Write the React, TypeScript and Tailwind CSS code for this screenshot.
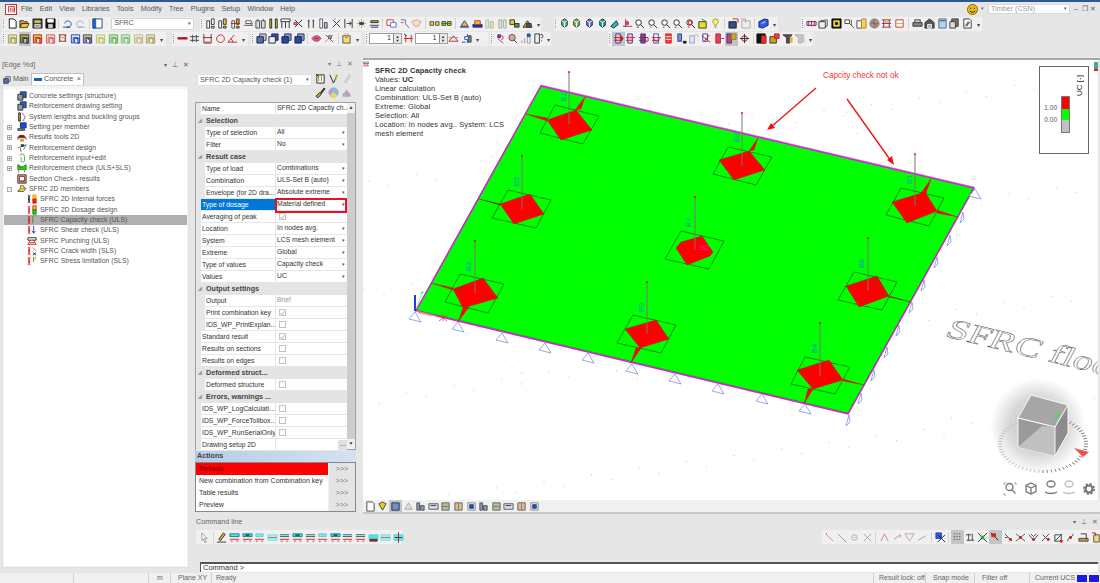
import React from "react";

type Part = [string, string, string];
const P = (d: string, s = "#333", f = "none"): Part => [d, s, f];

const pair = (c: string, f: string): Part[] => [P("M2 3h3v8H2z", c, "#fff"), P("M7 1h3v6H7z", c, f), P("M7 9h3v2H7z", c, f)];
const frame = (c: string, f: string): Part[] => [P("M1.5 2h9v9h-2V5h-5v6h-2z", c, f), P("M5 6h5v5H5z", c, "none")];
const rb = (c: string, f: string): Part[] => [P("M3 1h5v10H3z", "#2040c0", f), P("M1 5h10M1 8h8", c)];
const mag = (c: string): Part[] => [P("M2 5a3 3 0 1 0 6 0a3 3 0 1 0-6 0", "#222", "#fff"), P("M7.5 7.5L11 11", "#222"), P("M3 10h2", c)];
const cube = (c: string): Part[] => [P("M3 3l3-2 3 2v5l-3 2-3-2z", "#222", c), P("M3 3l3 2 3-2M6 5v5", "#fff")];
const beam = (c: string): Part[] => [P("M1 2h10v3H1z", c, "#50e8e8"), P("M1 8h10", "#e02020"), P("M2 10h2M8 10h2", "#e02020")];

const G: Record<string, Part[]> = {
  doc: [P("M2.5 1h5L10 3.5V11H2.5z", "#111", "#fff")],
  open: [P("M1 3h4l1 1h3v2H3l-2 4z", "#333", "#d9a520"), P("M3 6h8l-2 4.5H1z", "#333", "#f0c030")],
  saveAll: [P("M1 1h10v10H1z", "#333", "#333"), P("M3 3h6v2H3z", "#d8c040", "#d8c040"), P("M3 7h6v3H3z", "#ddd", "#999")],
  save: [P("M1 1h10v10H1z", "#111", "#111"), P("M3 1.5h6v3H3z", "#fff", "#fff"), P("M4 7h4v3.5H4z", "#ccc", "#ccc")],
  undo: [P("M3 6a3.5 3.5 0 1 1 2 4H9", "#2050b0"), P("M1 10h7", "#2050b0")],
  redo: [P("M9 6a3.5 3.5 0 1 0-2 4H3", "#a0a8b8"), P("M4 10h7", "#a0a8b8")],
  panel: [P("M1 1h10v10H1z", "#204070", "#fff"), P("M1 1h3v10H1z", "#2060b0", "#2060b0")],
  c1: pair("#333", "#fff"),
  c2: pair("#333", "#e8c828"),
  c3: [...pair("#444", "#c8a020"), P("M1 6h10", "#c02020")],
  c4: [P("M1 8h10M3 3h6v3H3z", "#555", "#fff"), P("M8 8l3-3", "#d02020")],
  c5: [P("M1 3h4v8H1zM7 3h4v8H7z", "#444", "#ddd"), P("M3 1v2M9 1v2", "#2040c0")],
  c6: [P("M2 1h2v10H2zM8 1h2v10H8z", "#222", "#e8c828")],
  c7: [P("M1 1h10v3H1z", "#333", "#fff"), P("M2 4v7M6 4v7M10 4v7", "#333")],
  c8: [P("M2 2l8 8M10 2l-8 8", "#224"), P("M1 5h3v2H1z", "#c02020", "#e8c828")],
  c9: [P("M3 2v9M8 2v9", "#222"), P("M2 3h2M7 3h2", "#2040c0"), P("M2 10h2M7 10h2", "#d0a020")],
  c10: [P("M2 1h3v10H2z", "#555", "#fff"), P("M7 5h3v6H7z", "#2040c0", "#e8c828")],
  c11: [P("M2 2l4 4-4 4M10 2L6 6l4 4", "#333"), P("M4 1h1", "#2040c0")],
  c12: [P("M2 1v10M10 1v10M4 6h5", "#333"), P("M7 4l2 2-2 2", "#222")],
  spark: [P("M6 1v10M1 6h10M2.5 2.5l7 7M9.5 2.5l-7 7", "#d0b020"), P("M4 5h4v2H4z", "#2040a0", "#2040a0")],
  barh: [P("M2 3h8v2H2z", "#222", "#e8c828"), P("M1 8h10", "#2040a0"), P("M2 10h8", "#333")],
  redbox: [P("M1 2h7v6H1z", "#d03030", "#fff"), P("M5 5h6v5H5z", "#5070c0", "#fff")],
  hook: [P("M2 2h5v4M7 6l4 5", "#5070c0"), P("M2 5h3", "#e04040")],
  peach: [P("M1 4l5-2 5 2-3 5H4z", "#d8a090", "#f5e0d0")],
  glass1: [P("M1 4h4v4H1zM7 4h4v4H7z", "#555", "#e8c828")],
  glass2: [P("M1 4h4v4H1zM7 4h4v4H7z", "#333", "#e0e020"), P("M1 6h10", "#208020")],
  by1: [P("M2 9l4-6 4 6z", "#2030a0", "#e8c828"), P("M1 10h10", "#2030a0")],
  by2: [P("M1 7h10v3H1z", "#2030a0", "#2030a0"), P("M3 3h6v4H3z", "#d03030", "#e8c828")],
  gh1: [P("M2 2h3v9H2z", "#a8c8a0", "#d8ecd0"), P("M7 4h3v7H7z", "#b0b090", "#e8e8c0")],
  gh2: [P("M2 2h3v9H2zM7 2h3v9H7z", "#a0a8a0", "#dde8d8")],
  by3: [P("M1 2h5v5H1z", "#333", "#e8c828"), P("M6 6h5v4H6z", "#333", "#40a040")],
  by4: [P("M1 10l5-7 5 7z", "#333", "#c8a030"), P("M5 6h5v4H5z", "#333", "#555")],
  v1: cube("#50c090"),
  v2: cube("#80c060"),
  v3: cube("#6080d0"),
  v4: cube("#20a0a0"),
  v5: [P("M2 9l6-6 2 4-5 4z", "#222", "#20c0c0")],
  axis: [P("M4 1v8h7", "#d02020"), P("M1 9h4", "#2040c0"), P("M4 4h3v3H4z", "#c03060", "#e04080")],
  m1: mag("#222"), m2: mag("#888"), m3: mag("#666"), m4: mag("#444"),
  m5: [...mag("#d02020"), P("M4 3h3v4H4z", "#d02020")],
  yc: [P("M2 4h8v7H2z", "#333", "#e8e020"), P("M5 1l5 3", "#208020")],
  bulb: [P("M3 4a3 3 0 1 1 6 0c0 2-2 2-2 4H5c0-2-2-2-2-4z", "#a09020", "#f8f080"), P("M5 10h2", "#555")],
  bl1: [P("M1 4h8v7H1z", "#222", "#30508a"), P("M5 1h6v4", "#d02020")],
  bl2: [P("M2 3h9v8H2z", "#a8a8b0", "#eee"), P("M1 1h5v4", "#d09090")],
  bl3: [P("M1 4l6-3 4 1v6l-6 3-4-1z", "#102080", "#3060e0"), P("M4 6l4-2", "#e8e8ff")],
  d1: [P("M1 4h10v4H1z", "#203080", "#eef"), P("M3 3v6M6 3v6M9 3v6", "#d02020")],
  d2: [P("M3 3l7-1v7l-7 1z", "#444", "#fff"), P("M1 4h7v7H1z", "#333", "#eee")],
  d3: [P("M1 1h10v10H1z", "#111", "#111"), P("M3 3h6v6H3z", "#e8d020", "#e8d020"), P("M5 5h2v2H5z", "#111", "#111")],
  d4: [P("M1 2h5v4H1z", "#444", "#ffe"), P("M6 6l5 5M8 2v6", "#555")],
  d5: [P("M1 3h5v8H1z", "#444", "#fff"), P("M6 1h5v10H6z", "#c08020", "#f0d060")],
  d6: [P("M6 1a5 5 0 1 0 .01 0", "#777", "#999"), P("M2 6h8M6 2v8M3 3l6 6", "#c05050")],
  d7: [P("M1 2h10M1 6h10M1 10h10", "#d02020"), P("M3 2v8M9 2v8", "#2040b0"), P("M5 3h2v2H5z", "#e8c828", "#e8c828")],
  d8: [P("M2 2h8v8H2z", "#d03030", "#fff"), P("M2 6h8", "#d8b020")],
  pr1: [P("M1 5h10v4H1z", "#333", "#888"), P("M3 2h6v3H3z", "#444", "#ccc")],
  pr2: [P("M1 5l5-4 5 4v6H1z", "#333", "#555"), P("M4 7h4v4H4z", "#fff", "#aaa")],
  pr3: [P("M2 1h8v10H2z", "#4070a0", "#b8d0e8"), P("M3 3h6", "#204060")],
  pr4: [P("M3 1h7v8H3z", "#333", "#777"), P("M1 4h6v7H1z", "#333", "#ddd")],
  pr5: [P("M2 1h6l2 2v8H2z", "#333", "#fff"), P("M4 8l3-4 1 1-3 4z", "#333", "#e8c828")],
  f1: frame("#a0a050", "#e8e0b0"),
  f2: frame("#333", "#c8a840"),
  f3: [...frame("#c02020", "#e8c828")],
  f4: frame("#d06060", "#f0d0d0"),
  f5: [P("M2 2h8M2 9h8", "#d02020"), P("M3 2v7M9 2v7", "#222"), P("M2 5h8", "#c0a020")],
  f6: [...frame("#2040b0", "#e0e8ff")],
  f7: [...frame("#2040b0", "#e8c828"), P("M6 6l5 5", "#d02020")],
  f8: frame("#b8c070", "#f0f0c0"),
  f9: [...frame("#60b060", "#c8e8a0")],
  f10: [...frame("#70c070", "#d0f0d0")],
  f11: frame("#c0b890", "#eee8c8"),
  f12: frame("#a8a060", "#e8e0b8"),
  rbar: [P("M1 5h10v1.6H1z", "#b01818", "#c81818")],
  h: [P("M1 4h10M1 8h10M4 2v8M8 2v8", "#444")],
  u: [P("M2 1v10h8V1M1 5h10", "#703030"), P("M3 10h6", "#d02020")],
  o: [P("M6 2a4.2 4.2 0 1 0 .01 0", "#c02020")],
  ang: [P("M1 10h10M1 10L8 2M4 6a4 4 0 0 1 2 4", "#c02020")],
  st1: [P("M4 1h7v7H4z", "#444", "#b8c8e8"), P("M1 4h7v7H1z", "#223", "#5070b0")],
  st2: [P("M4 1h7v7H4z", "#203060", "#3050a0"), P("M1 4h7v7H1z", "#223", "#eef")],
  st3: [P("M4 1h7v7H4z", "#203060", "#88a0d0"), P("M1 4h7v7H1z", "#102050", "#2a4a90")],
  eye: [P("M1 6c3-4 7-4 10 0c-3 4-7 4-10 0z", "#b03050", "#e06080"), P("M4 6h4", "#2040a0")],
  cross: [P("M1 10L10 2", "#d8a020"), P("M2 2l8 8", "#d02020"), P("M5 3h3v3H5z", "#2050c0", "#e8c020")],
  ybox: [P("M2 3h8v8H2z", "#555", "#f0e070"), P("M4 1h1M7 1h1M5 5h2", "#d02020")],
  br: [P("M3 2v8M9 2v8M1 6h10", "#d02020"), P("M1 1l3 2", "#333")],
  tri: [P("M1 9l5-6 5 6z", "#c03030", "#f8e0e0"), P("M1 5h10", "#50b0b0")],
  blue: [P("M7 1v3H4v3h3v4M1 10h4", "#2050b0"), P("M8 3h3v7H8z", "#444", "#6080c0")],
  q1: [P("M3 2h3v3H3z", "#2040c0", "#e02040"), P("M3 6l6 5", "#d02040"), P("M7 3a2 2 0 1 1 0 4", "#d02040")],
  q2: [P("M2 5a3.5 3.5 0 1 0 7 0a3.5 3.5 0 1 0-7 0", "#555", "#e8a0a0"), P("M7.5 7.5L11 11", "#333")],
  q3: [P("M2 8v3M5 6v5M8 3h3v8H8z", "#999"), P("M8 1h3v3H8z", "#2050a0", "#3060c0")],
  q4: [P("M2 1h5v10H2z", "#333", "#eee"), P("M8 2a2 2 0 0 1 3 1c0 1-1.5 1.5-1.5 3M9.5 8v1", "#334")],
  r1: [...rb("#d02020", "#f8c0c0"), P("M9 3l2 3-2 3z", "#c02020", "#c02020")],
  r2: rb("#d02020", "#ffc8c8"),
  r3: [...rb("#2040c0", "#d83030"), P("M7 9h4V5", "#d02020")],
  r4: [...rb("#d02020", "#fff"), P("M3 6a3 3 0 1 0 6 0", "#d02020")],
  r5: [P("M3 1h6v10H3z", "#d02020", "#f04040"), P("M3 4h6M3 7h6", "#f8e0e0")],
  r6: [P("M2 1h4v8H2z", "#2040a0", "#8090d0"), P("M8 9h3v2H8z", "#222", "#222")],
  r7: [P("M2 3h5v8H2z", "#90a0d0", "#e0e8f8"), P("M7 4c0-3 4-3 4 0", "#d0a0a0")],
  r8: [P("M2 1h5v8H2z", "#2040a0", "#fff"), P("M1 3l9 7M9 2l-6 8", "#e01010")],
  r9: [P("M2 1h5v10H2z", "#c02020", "#e84060"), P("M8 6h3", "#2040c0")],
  r10: [P("M1 1h5v10H1z", "#2040a0", "#d04060"), P("M6 1h5v6H6z", "#908020", "#c0b040")],
  tgt: [P("M6 3a3 3 0 1 0 .01 0", "#601818"), P("M6 1v10M1 6h10", "#601818")],
  s1: [P("M1 1h9v10H1z", "#111", "#111"), P("M6 3h5v8H6z", "#c02020", "#e03030")],
  s2: [P("M1 4h7v7H1z", "#333", "#d0a020"), P("M6 1h5v5H6z", "#c02020", "#e84040")],
  s3: [P("M1 2h10L8 5v6H5V5z", "#333", "#555"), P("M9 5h2v5H9z", "#d0b040", "#e0c040")],
  s4: [P("M1 2h10L8 5v6H5V5z", "#aaa", "#ccc"), P("M9 5h2v5H9z", "#b8b8b8", "#ddd")],
  cur: [P("M3 1l6 6H6l2 4-1.5.5-2-4L3 9z", "#999", "#fff")],
  pen: [P("M3 8l5-7 2 1.5-5 7z", "#333", "#d8b020"), P("M1 11h10", "#333")],
  be1: beam("#108080"), be2: [...beam("#108080"), P("M4 3h4v1H4z", "#206060", "#206060")],
  be3: [P("M2 2h8v3H2z", "#50d0d0", "#90e0e0"), P("M1 8h10", "#e02020"), P("M2 10h2M8 10h2", "#e02020")],
  be4: [P("M1 3h10M1 5h10", "#106060"), P("M1 8h10", "#e02020"), P("M2 10h2M8 10h2", "#e02020")],
  be5: [P("M1 3h10v5H1z", "#50e0e0", "#50e0e0"), P("M2 8h8v2H2z", "#702020", "#c02020")],
  be6: [P("M1 3h10v6H1z", "#70e8e8", "#a0f0f0"), P("M1 6h10", "#e06060")],
  be7: [P("M1 3h10v6H1z", "#50d8d8", "#70e0e0"), P("M6 0v12", "#d01010"), P("M2 6h8", "#333")],
  sn1: [P("M2 2l8 8", "#e08080"), P("M2 2h1", "#d02020")],
  sn2: [P("M2 2l8 8", "#a09090"), P("M10 10h1", "#d06060")],
  sn3: [P("M3 6a3 3 0 1 0 6 0a3 3 0 1 0-6 0", "#aaa"), P("M6 6h1", "#d06060")],
  sn4: [P("M2 2l8 8M10 2l-8 8", "#a8a0a0")],
  sn5: [P("M2 10l4-8 4 8", "#d08080")],
  sn6: [P("M2 8l7-5M9 3v3", "#d08080")],
  sn7: [P("M1 2h10L6 10z", "#b0a8b0")],
  sn8: [P("M1 9l9-5", "#c89090")],
  sn9: [P("M1 1h6v6H1z", "#2040c0", "#3060e0"), P("M3 3l8 8M11 3l-8 8", "#222")],
  sn10: [P("M2 2h1M5 2h1M8 2h1M2 5h1M5 5h1M8 5h1M2 8h1M5 8h1M8 8h1", "#222")],
  sn11: [P("M2 9h8M4 2v7M8 2v7M1 3h6", "#444"), P("M2 9h2", "#d02020")],
  sn12: [P("M1 1l10 10M11 1L1 11", "#333"), P("M4.5 4.5h3v3h-3z", "#20a020", "#20c020")],
  sn13: [P("M1 1l8 8", "#222"), P("M2 2h4v3H2z", "#d02020", "#d02020")],
  sn14: [P("M2 2l8 8M2 6h3", "#444"), P("M7 7h2v2H7z", "#d02020", "#d02020")],
  sn15: [P("M1 2l10 8M11 2L1 10", "#555"), P("M5 5h2v2H5z", "#d02020", "#d02020")],
  sn16: [P("M1 3l5 6 5-6M3 2l3 3 3-3", "#444"), P("M5 7h2v2H5z", "#d02020", "#d02020")],
  sn17: [P("M2 10L10 2M3 3l6 6", "#444"), P("M8 7h2v2H8z", "#d02020", "#d02020")],
  sn18: [P("M2 3h7v7H2zM2 10L10 2", "#444"), P("M8 9h2v2H8z", "#d02020", "#d02020")],
  sn19: [P("M3 10C3 5 8 7 9 2", "#444"), P("M5 5h2v2H5z", "#d02020", "#d02020")],
  sn20: [P("M1 7h10v3H1z", "#444", "#c8a040"), P("M3 2h6v5", "#333")],
  sn21: [P("M3 3h6v8H3z", "#555", "#f0d880"), P("M1 1h4v3", "#d02020")],
  t1: [P("M4 1h7v7H4z", "#223", "#3060c0"), P("M1 4h6v7H1z", "#223", "#9098a8")],
  t2: [P("M2 1h2v10H2z", "#111", "#d8c020"), P("M6 1l4 5-3 5", "#a030a0")],
  t3: [P("M4 1h7v6H4z", "#102080", "#2050c0"), P("M1 8h8v2H1z", "#223", "#999")],
  t4: [P("M1 9a5 5 0 0 1 10 0", "#222"), P("M3 4h5l2 3H1z", "#c02020", "#333"), P("M4 9h4v2H4z", "#d0a020", "#d0a020")],
  t5: [P("M1 6l5-2 5-2-3 6", "#1a8060"), P("M4 6l1 5", "#d02020"), P("M5 2h3v2H5z", "#203060", "#203060")],
  t6: [P("M6 1a3 3 0 0 1 3 3v5a2 2 0 0 1-4 0V5", "#40a040"), P("M3 3l3-2", "#40a040")],
  t7: [P("M1 2l5 3 5-3v6H1z", "#108010", "#10e010"), P("M2 4l2 2M6 4v2", "#e01010"), P("M2 9v2M9 9v2", "#e01010")],
  t8: [P("M1 1h10v10H1z", "#222", "#e8a0a0"), P("M3 3h6v6H3z", "#b02020", "#fff"), P("M4 8h6", "#208020")],
  t9: [P("M1 8l4-3h6l-3 4H1z", "#555", "#e0d020"), P("M4 5V2h4l1 3", "#666", "#f0e040")],
  rr: [P("M1 1c3 3 3 7 0 10M4 1c-3 3-3 7 0 10", "#111"), P("M7 1h4v5H7z", "#e0b020", "#e8d020"), P("M7 6h4v5H7z", "#e01010", "#f02020")],
  rg: [P("M1 1c3 3 3 7 0 10M4 1c-3 3-3 7 0 10", "#e01010"), P("M7 1h4v5H7z", "#e01010", "#e8d020"), P("M7 6h4v5H7z", "#108010", "#20d020")],
  rc: [P("M1 1c3 3 3 7 0 10M4 1c-3 3-3 7 0 10", "#e01010"), P("M7 1v9", "#6a6a20"), P("M8 1h3", "#88a020")],
  rs: [P("M1 1c3 3 3 7 0 10M4 1c-3 3-3 7 0 10", "#e01010"), P("M8 1v8M6 7l2 3 2-3", "#1030c0")],
  rp: [P("M1 2h10v3H1z", "#222", "#eee"), P("M4 5L1 10h10L8 5", "#c01010"), P("M3 8h6", "#c01010")],
  rw: [P("M1 1c3 3 3 7 0 10M4 1c-3 3-3 7 0 10", "#e01010"), P("M7 8l4 3M11 8l-4 3", "#222"), P("M7 2l4 4", "#777")],
  rl: [P("M1 1c3 3 3 7 0 10M4 1c-3 3-3 7 0 10", "#e01010"), P("M8 1v6", "#208020"), P("M10 1v3", "#d0a020")],
  vw1: [P("M2 1h6l2 2v8H2z", "#444", "#fff")],
  vw2: [P("M2 3l4-2 4 2-4 7z", "#444", "#e8c828")],
  vw3: [P("M2 2h8v8H2z", "#203060", "#7090c0")],
  vw4: [P("M2 9l4-7 4 7z", "#a8a8a8", "#ddd")],
  vw5: [P("M2 2h3v8H2zM6 5h4v5H6z", "#556", "#8898a8")],
  vw6: [P("M1 3h10v6H1z", "#555", "#dde"), P("M3 5h6", "#333")],
  vw7: [P("M2 2h8v8H2z", "#666", "#b8b8a0"), P("M2 6h8", "#40a040")],
  vw8: [P("M2 2h8v8H2z", "#666", "#d0c090"), P("M6 2v8", "#c06060")],
  vw9: [P("M2 2h8v8H2z", "#888", "#eee"), P("M4 4h4v4H4z", "#2050a0", "#2050a0")],
  bi1: [P("M2 2h8v9H2z", "#222", "#fff"), P("M4 2v7M7 2v7", "#a08020"), P("M1 1l3 3", "#222")],
  bi2: [P("M2 2l4 9 4-9", "#222"), P("M8 2l2 3-2 1 2 2", "#d0c020")],
  bi3: [P("M4 10L9 2l1 1-5 8z", "#bbb", "#eee")],
  bi4: [P("M1 10l4-4 2 2-4 4z", "#333", "#c8a020"), P("M6 6l4-5 1 1-4 5z", "#333", "#222")],
  bi5: [P("M6 1a5 5 0 1 0 .01 0", "#b0a0d0", "#b898e0"), P("M6 1v5h5a5 5 0 0 0-5-5", "#70c8d8", "#70c8d8"), P("M6 6L2 9.5a5 5 0 0 0 8 0z", "#e8d860", "#e8d860")],
  bi6: [P("M2 10c0-6 8-6 8 0z", "#80b0c0", "#90c8d0"), P("M6 3l3 5H5z", "#d890a0", "#e098a8")],
};

function Ico({ k, size = 11 }: { k: string; size?: number }) {
  return (
    <svg width={size} height={size} viewBox="0 0 12 12" strokeWidth="1">
      {(G[k] ?? []).map((p, i) => (
        <path key={i} d={p[0]} stroke={p[1]} fill={p[2]} />
      ))}
    </svg>
  );
}

// list of icon keys: "|" separator, "v" overflow chevron, "*key" pressed
function Icons({ list }: { list: string }) {
  return (
    <>
      {list.split(" ").map((k, i) =>
        k === "|" ? (
          <span key={i} className="w-px h-[11px] mx-[2px] bg-[#d4d4d4] shrink-0" />
        ) : k === "v" ? (
          <span key={i} className="w-[9px] shrink-0 flex justify-center items-end h-[9px] text-[#444] text-[6px] leading-none">▾</span>
        ) : (
          <span key={i} className={`w-[12.6px] h-[14px] shrink-0 flex items-center justify-center ${k[0] === "*" ? "bg-[#c4c4c4]" : ""}`}>
            <Ico k={k.replace("*", "")} />
          </span>
        )
      )}
    </>
  );
}

function Grip() {
  return <span className="w-[2px] h-[9px] mx-px shrink-0 border-l border-dotted border-[#999]" />;
}

function Spin() {
  return (
    <span className="w-[33px] h-[11px] shrink-0 bg-white border border-[#a0a0a0] flex items-center justify-end text-[#333]">
      <span className="pr-[2px]">1</span>
      <span className="w-[8px] h-full bg-[#e8e8e8] border-l border-[#888] flex flex-col items-center justify-center text-[4px] leading-[4px] text-[#222]">
        <span>▲</span>
        <span>▼</span>
      </span>
    </span>
  );
}

const menus = ["File", "Edit", "View", "Libraries", "Tools", "Modify", "Tree", "Plugins", "Setup", "Window", "Help"];

const tree: { t: string; i: string; lvl: number; exp?: string; sel?: boolean }[] = [
  { t: "Concrete settings (structure)", i: "t1", lvl: 1 },
  { t: "Reinforcement drawing setting", i: "t1", lvl: 1 },
  { t: "System lengths and buckling groups", i: "t2", lvl: 1 },
  { t: "Setting per member", i: "t3", lvl: 1, exp: "+" },
  { t: "Results tools 2D", i: "t4", lvl: 1, exp: "+" },
  { t: "Reinforcement design", i: "t5", lvl: 1, exp: "+" },
  { t: "Reinforcement input+edit", i: "t6", lvl: 1, exp: "+" },
  { t: "Reinforcement check (ULS+SLS)", i: "t7", lvl: 1, exp: "+" },
  { t: "Section Check - results", i: "t8", lvl: 1 },
  { t: "SFRC 2D members", i: "t9", lvl: 1, exp: "-" },
  { t: "SFRC 2D Internal forces", i: "rr", lvl: 2 },
  { t: "SFRC 2D Dosage design", i: "rg", lvl: 2 },
  { t: "SFRC Capacity check (ULS)", i: "rc", lvl: 2, sel: true },
  { t: "SFRC Shear check (ULS)", i: "rs", lvl: 2 },
  { t: "SFRC Punching (ULS)", i: "rp", lvl: 2 },
  { t: "SFRC Crack width (SLS)", i: "rw", lvl: 2 },
  { t: "SFRC Stress limitation (SLS)", i: "rl", lvl: 2 },
];

type Row = { l: string; v?: string; h?: boolean; n?: boolean; k?: "drop" | "on" | "off" | "gray" | "text" | "more"; blue?: boolean };

const rows: Row[] = [
  { l: "Name", v: "SFRC 2D Capacity ch...", k: "text" },
  { l: "Selection", h: true },
  { l: "Type of selection", v: "All", k: "drop", n: true },
  { l: "Filter", v: "No", k: "drop", n: true },
  { l: "Result case", h: true },
  { l: "Type of load", v: "Combinations", k: "drop", n: true },
  { l: "Combination", v: "ULS-Set B (auto)", k: "drop", n: true },
  { l: "Envelope (for 2D dra...", v: "Absolute extreme", k: "drop", n: true },
  { l: "Type of dosage", v: "Material defined", k: "drop", blue: true },
  { l: "Averaging of peak", k: "on" },
  { l: "Location", v: "In nodes avg.", k: "drop" },
  { l: "System", v: "LCS mesh element", k: "drop" },
  { l: "Extreme", v: "Global", k: "drop" },
  { l: "Type of values", v: "Capacity check", k: "drop" },
  { l: "Values", v: "UC", k: "drop" },
  { l: "Output settings", h: true },
  { l: "Output", v: "Brief", k: "gray", n: true },
  { l: "Print combination key", k: "on", n: true },
  { l: "IDS_WP_PrintExplan...", k: "off", n: true },
  { l: "Standard result", k: "on" },
  { l: "Results on sections", k: "off" },
  { l: "Results on edges", k: "off" },
  { l: "Deformed struct...", h: true },
  { l: "Deformed structure", k: "off", n: true },
  { l: "Errors, warnings ...", h: true },
  { l: "IDS_WP_LogCalculati...", k: "off" },
  { l: "IDS_WP_ForceTollbox...", k: "off" },
  { l: "IDS_WP_RunSerialOnly", k: "off" },
  { l: "Drawing setup 2D", k: "more" },
];

function Check({ on }: { on?: boolean }) {
  return (
    <span className="w-[7px] h-[7px] ml-[2px] bg-white border border-[#c4c4c4] flex items-center justify-center">
      {on && (
        <svg width="6" height="6" viewBox="0 0 6 6">
          <path d="M0.5 3l1.7 2L5.5 1" stroke="#999" fill="none" />
        </svg>
      )}
    </span>
  );
}

function PropRow({ r }: { r: Row }) {
  if (r.h) {
    return (
      <div className="h-[12px] flex items-center bg-[#e4e4e4] font-bold text-[#444] text-[7.2px]">
        <span className="w-[10px] pl-[2px] text-[5px] text-[#999]">◢</span>
        <span>{r.l}</span>
      </div>
    );
  }
  return (
    <div className="h-[12px] flex bg-[#e6e6e6] relative">
      <div className={`${r.n ? "w-[9px]" : "w-[5px]"} shrink-0`} />
      <div className={`${r.n ? "w-[70px]" : "w-[74px]"} ${r.blue ? "bg-[#0078d7] text-white" : "bg-white text-[#333]"} shrink-0 border-b border-[#e6e6e6] pl-px leading-[11px] whitespace-nowrap overflow-hidden`}>{r.l}</div>
      <div className="w-[71px] ml-px bg-white border-b border-[#e6e6e6] flex items-center pl-px whitespace-nowrap overflow-hidden relative">
        {r.k === "on" && <Check on />}
        {r.k === "off" && <Check />}
        {r.k === "gray" && <span className="text-[#999]">{r.v}</span>}
        {(r.k === "text" || r.k === "drop") && <span className="text-[#333]">{r.v}</span>}
        {r.k === "drop" && <span className="absolute right-[2px] text-[5px] text-[#555]">▾</span>}
        {r.k === "more" && <span className="absolute right-0 w-[9px] h-[10px] bg-[#e0e0e0] text-center leading-[7px] text-[#444]">...</span>}
      </div>
      {r.blue && <span className="absolute left-[79px] top-[-1.5px] w-[72px] h-[15px] border-2 border-[#e81123] z-10" />}
    </div>
  );
}

function ActionRow({ t, red }: { t: string; red?: boolean }) {
  return (
    <div className="h-[12px] flex text-[7px]">
      <div className={`w-[132px] pl-[3px] leading-[11px] whitespace-nowrap ${red ? "bg-[#ff0000] text-[#7a0000]" : "bg-white text-[#333]"}`}>{t}</div>
      <div className="w-[26px] ml-px bg-[#e4e4e4] text-center text-[#777] leading-[11px]">&gt;&gt;&gt;</div>
    </div>
  );
}

type Col = { x: number; top: number; bot: number; label: string; lx: number; ly: number; d: string; sq: string; t: string[]; dark?: boolean };

const cols: Col[] = [
  { x: 569, top: 71, bot: 123, label: "B2", lx: 566, ly: 100, d: "547,119 576,109 592,129 561,139", sq: "555,104 599,115 583,143 540,132", t: ["547,117 526,113 547,120", "575,109 585,96 581,108"] },
  { x: 522, top: 155, bot: 208, label: "B5", lx: 519, ly: 185, d: "500,203 530,193 544,213 514,223", sq: "508,189 551,199 536,227 492,217", t: ["500,203 479,198 500,204"], dark: true },
  { x: 695, top: 196, bot: 248, label: "B7", lx: 691, ly: 226, d: "676,247 681,241 702,235 713,251 710,255 687,264", sq: "681,230 724,240 709,268 665,258", t: [] },
  { x: 475, top: 240, bot: 292, label: "B3", lx: 471, ly: 270, d: "453,288 483,277 498,297 463,307", sq: "460,273 504,283 488,312 445,301", t: ["453,287 431,282 453,289", "463,307 458,321 469,306"] },
  { x: 647, top: 281, bot: 333, label: "B9", lx: 644, ly: 311, d: "625,328 656,319 669,338 640,347", sq: "633,314 676,324 661,352 617,342", t: ["636,347 631,362 641,347"] },
  { x: 742, top: 112, bot: 165, label: "B8", lx: 739, ly: 141, d: "719,159 749,150 765,169 734,179", sq: "728,146 772,156 756,184 713,173", t: ["749,150 758,137 754,149"] },
  { x: 915, top: 153, bot: 205, label: "B1", lx: 912, ly: 183, d: "892,201 925,191 937,210 907,222", sq: "901,187 944,197 929,225 886,214", t: ["921,192 931,178 926,192", "937,209 958,216 937,212"] },
  { x: 868, top: 237, bot: 290, label: "B6", lx: 864, ly: 267, d: "846,285 877,275 889,295 859,306", sq: "854,271 897,281 882,309 838,299", t: ["889,295 911,301 889,296"], dark: true },
  { x: 820, top: 322, bot: 375, label: "B4", lx: 817, ly: 352, d: "797,369 829,359 843,379 813,388", sq: "805,356 850,366 835,393 791,383", t: ["808,388 804,403 813,388", "843,378 864,384 843,380"] },
];

const flatSupports = [[415, 316], [458, 326], [502, 337], [545, 347], [588, 357], [632, 368], [675, 378], [718, 388], [762, 398], [805, 408], [975, 193]];
const sideSupports = [[848, 420], [860, 398], [873, 375], [886, 352], [898, 330], [911, 307], [923, 285], [936, 262], [949, 240], [962, 217]];

const dots = Array.from({ length: 130 }, (_, i) => [363 + ((i * 137.5 + 31) % 735), 59 + ((i * 89.3 + 17) % 440)]);

function Scene() {
  const ticks = Array.from({ length: 64 }, (_, i) => (i * Math.PI * 2) / 64);
  return (
    <svg className="absolute inset-0 w-full h-full" viewBox="363 59 735 440">
      <defs>
        <radialGradient id="halo" gradientUnits="userSpaceOnUse" cx="1038" cy="425" r="48">
          <stop offset="0" stopColor="#bdbdbd" />
          <stop offset="0.6" stopColor="#d8d8d8" />
          <stop offset="1" stopColor="#ffffff" />
        </radialGradient>
      </defs>
      {dots.map((d, i) => (
        <circle key={i} cx={d[0]} cy={d[1]} r="0.6" fill="#c8c8c8" />
      ))}
      <polygon points="541,85 974,187 848,413 416,310" fill="#00ff00" />
      {dots.filter((d, i) => i % 2 === 0).map((d, i) => (
        <circle key={i} cx={480 + ((d[0] * 3) % 380)} cy={110 + ((d[1] * 7) % 270)} r="0.4" fill="#10c010" />
      ))}
      <polygon points="541,85 974,187 848,413 416,310" fill="none" stroke="#f010f0" strokeWidth="1.4" />
      <polyline points="416,309 541,84 974,186" fill="none" stroke="#555" strokeWidth="0.5" />
      <polyline points="416,309 848,412 974,186" fill="none" stroke="#555" strokeWidth="0.5" />
      {cols.map((c) => (
        <g key={c.label}>
          <polygon points={c.sq} fill="none" stroke="#1a4a1a" strokeWidth="0.6" />
          {c.t.map((t, i) => (
            <polygon key={i} points={t} fill={c.dark ? "#a01010" : "#ff0000"} stroke={c.dark ? "#7a1010" : "#d00000"} strokeWidth="0.3" />
          ))}
          <polygon points={c.d} fill="#ff0000" stroke="#b00000" strokeWidth="0.3" />
          <line x1={c.x} y1={c.top} x2={c.x} y2={c.bot} stroke="#777" strokeWidth="1" />
          <circle cx={c.x} cy={c.top} r="0.9" fill="#ff0000" />
          <text transform={`rotate(-90 ${c.lx} ${c.ly})`} x={c.lx} y={c.ly} fontSize="7.5" fill="#10a0b0">
            {c.label}
          </text>
        </g>
      ))}
      <text x="700" y="249" fontSize="8" fill="#ff10c0">S2</text>
      {flatSupports.map((s, i) => (
        <polygon key={i} points={`${s[0]},${s[1] - 5} ${s[0] - 6},${s[1] + 2} ${s[0] + 6},${s[1] + 5}`} fill="#fff" stroke="#7080d8" strokeWidth="0.7" />
      ))}
      {sideSupports.map((s, i) => (
        <polygon key={i} points={`${s[0] + 1},${s[1] - 6} ${s[0] - 2},${s[1] + 5} ${s[0] + 2},${s[1] + 1}`} fill="#fff" stroke="#7080d8" strokeWidth="0.7" />
      ))}
      <line x1="415" y1="310" x2="415" y2="294" stroke="#1020e0" strokeWidth="1.8" />
      <path d="M416 308l7-18M421 291l3 1M420 293l3-2" stroke="#40e040" strokeWidth="0.6" fill="none" />
      <path d="M416 310l20 5M418 312l14 3" stroke="#f0a0a0" strokeWidth="0.8" fill="none" />
      <path d="M439 314l8 6M447 314l-8 6M443 313v7" stroke="#f03030" strokeWidth="0.7" fill="none" />

      <text x="823" y="77" fontSize="8.2" fill="#ff3030">Capcity check not ok</text>
      <path d="M816 87L771 126" stroke="#f01010" strokeWidth="1.3" />
      <polygon points="767,129 771,122 775,127" fill="#f01010" />
      <path d="M847 98L891 160" stroke="#f01010" strokeWidth="1.3" />
      <polygon points="894,164 887,159 892,155" fill="#f01010" />

      <text transform="matrix(1.27 0.31 -0.45 0.85 944 335)" x="0" y="0" fontSize="30" fontFamily="'Liberation Serif', serif" fill="#fff" stroke="#555" strokeWidth="0.5">
        SFRC floor
      </text>

      <circle cx="1038" cy="425" r="48" fill="url(#halo)" />
      {ticks.map((a, i) => {
        const c = Math.cos(a), s = Math.sin(a);
        return (
          <line key={i} x1={1043 + 41 * c} y1={443 + 26 * s} x2={1043 + 45 * c} y2={443 + 29 * s} stroke={c > 0 ? "#777" : "#bbb"} strokeWidth="0.9" />
        );
      })}
      <polygon points="1031,394 1068,404 1055,426 1018,417" fill="#a6a6a6" stroke="#fff" strokeWidth="0.9" />
      <polygon points="1018,417 1055,426 1055,455 1018,446" fill="#9a9a9a" stroke="#fff" strokeWidth="0.9" />
      <polygon points="1018,446 1042,425 1055,426 1055,455" fill="#c0c0c0" />
      <polygon points="1055,426 1068,404 1068,432 1055,455" fill="#8c8c8c" stroke="#fff" strokeWidth="0.9" />
      <line x1="1055" y1="419" x2="1059" y2="411" stroke="#40e040" strokeWidth="1.6" />
      <polygon points="1074,447 1089,451 1083,456" fill="#f05050" />

      <g stroke="#777" strokeWidth="1.3" fill="none">
        <path d="M1006 486a3.5 3.5 0 1 0 7 0a3.5 3.5 0 1 0-7 0M1012 489l3.500 3.500" />
        <path d="M1004 484v-2h2M1014 482h2v2M1004 492v2h2" strokeWidth="0.6" />
        <path d="M1031 482l5 2.500v6l-5 2.500-5-2.500v-6zM1026 484.500l5 2.500 5-2.500M1031 487v6" />
        <path d="M1047 483a4 3 0 1 0 8 0a4 3 0 1 0-8 0M1045 491c3 2 9 2 12 0" />
        <path d="M1065 483a4 3 0 1 0 8 0a4 3 0 1 0-8 0M1063 491c3 2 9 2 12 0" stroke="#c0c0c0" />
        <circle cx="1089" cy="488" r="3.5" strokeWidth="2.2" />
        <circle cx="1089" cy="488" r="5" strokeWidth="2" strokeDasharray="2.2 1.7" />
      </g>
    </svg>
  );
}

export default function App() {
  return (
    <div className="w-[1100px] h-[583px] overflow-hidden flex flex-col bg-[#e6e6e6] text-[7.2px] text-[#444] [font-family:'Liberation_Sans',sans-serif]">
      <div className="h-[2px] bg-[#2b579a] shrink-0" />
      {/* menu bar */}
      <div className="h-[14px] shrink-0 flex items-center">
        <span className="ml-[5px] w-[12px] h-[11px] flex items-center justify-center border border-[#a04040] bg-white">
          <svg width="9" height="9" viewBox="0 0 12 12"><path d="M2 10V2h8v8M5 4v5M8 4v5" stroke="#c01818" fill="#ffd8d8" /></svg>
        </span>
        <div className="ml-[4px] w-[280px] flex gap-[7.2px] text-[#555] text-[7.2px]">
          {menus.map((m) => <span key={m}>{m}</span>)}
        </div>
        <svg className="ml-[666px]" width="11" height="11" viewBox="0 0 12 12">
          <circle cx="6" cy="6" r="5.5" fill="#e8c010" stroke="#806000" />
          <path d="M4 4v1.500M8 4v1.500M3 7.500c1.500 2 4.500 2 6 0" stroke="#302000" fill="none" />
        </svg>
        <span className="ml-[3px] text-[5px] text-[#666]">▾</span>
        <div className="ml-[4px] w-[82px] h-[10px] bg-white border border-[#d8d8d8] flex items-center justify-between px-[2px] text-[#999]">
          <span>Timber (CSN)</span>
          <span className="text-[5px] text-[#555]">▾</span>
        </div>
        <span className="ml-[2px] w-[8px] text-center text-[#666]">–</span>
        <span className="ml-[1px] w-[8px] text-center text-[#666]">❐</span>
        <span className="w-[8px] text-center text-[#666]">✕</span>
      </div>
      {/* toolbars */}
      <div className="h-[15px] shrink-0 flex items-center">
        <div className="ml-[2px] w-[193px] h-[14px] bg-[#f0f0f0] flex items-center">
          <Grip />
          <Icons list="doc open saveAll save | undo redo | panel" />
          <div className="ml-[7px] w-[83px] h-[12px] bg-white border border-[#d4d4d4] flex items-center justify-between px-[2px] text-[#555]">
            <span>SFRC</span><span className="text-[5px]">▾</span>
          </div>
        </div>
        <div className="ml-[5px] w-[341px] h-[14px] bg-[#f0f0f0] flex items-center">
          <Grip />
          <Icons list="c1 c2 c3 c4 c5 c6 c7 c8 c9 c10 c11 c12 spark barh | redbox hook peach | glass1 glass2 | by1 by2 gh1 gh2 by3 by4 v" />
        </div>
        <div className="ml-[13px] w-[224px] h-[14px] bg-[#f0f0f0] flex items-center">
          <Grip />
          <Icons list="v1 v2 v3 v4 v5 axis m1 m2 m3 m4 m5 yc bulb | bl1 bl2 | bl3 v" />
        </div>
        <div className="ml-[23px] w-[181px] h-[14px] bg-[#f0f0f0] flex items-center">
          <Grip />
          <Icons list="d1 d2 d3 d4 d5 d6 d7 d8 | pr1 pr2 pr3 pr4 pr5 v" />
        </div>
      </div>
      <div className="h-[15px] shrink-0 flex items-center">
        <div className="ml-[2px] w-[164px] h-[14px] bg-[#f0f0f0] flex items-center">
          <Grip />
          <Icons list="f1 *f2 f3 f4 f5 f6 f7 f8 f9 f10 f11 f12 v" />
        </div>
        <div className="ml-[6px] w-[76px] h-[14px] bg-[#f0f0f0] flex items-center">
          <Grip />
          <Icons list="rbar h u o ang v" />
        </div>
        <div className="ml-[3px] w-[110px] h-[14px] bg-[#f0f0f0] flex items-center">
          <Grip />
          <Icons list="st1 st2 st3 st3 | eye cross | ybox v" />
        </div>
        <div className="ml-[4px] w-[123px] h-[14px] bg-[#f0f0f0] flex items-center">
          <Grip />
          <Spin />
          <Icons list="br" />
          <Spin />
          <Icons list="tri blue v" />
        </div>
        <div className="ml-[2px] w-[61px] h-[14px] bg-[#f0f0f0] flex items-center">
          <Grip />
          <Icons list="q1 q2 q3 q4 v" />
        </div>
        <div className="ml-[57px] w-[205px] h-[14px] bg-[#f0f0f0] flex items-center">
          <Grip />
          <Icons list="*r1 r2 r3 r4 r5 r6 r7 r8 r9 *r10 tgt | s1 s2 s3 s4 v" />
        </div>
      </div>
      <div className="h-[12px] shrink-0" />

      <div className="flex-1 flex min-h-0">
        {/* left tree panel */}
        <div className="w-[190px] shrink-0 flex flex-col">
          <div className="h-[14px] pt-px flex items-center pl-[2px] text-[#666]">
            <span className="flex-1">[Edge %d]</span>
            <span className="text-[6px] mr-[5px]">▾</span>
            <span className="mr-[5px]">⊥</span>
            <span className="mr-[1px]">✕</span>
          </div>
          <div className="h-[13px] pl-[2px] flex items-end">
            <div className="w-[29px] h-[11px] flex items-center gap-[2px] pl-px text-[#555]">
              <Ico k="st1" size={8} />Main
            </div>
            <div className="w-[53px] h-[12px] bg-white border border-b-0 border-[#c0c0c0] flex items-center text-[#555] pl-[2px]">
              <span className="w-[8px] h-[3px] bg-[#2060b0] mr-[2px]" />
              <span className="flex-1">Concrete</span>
              <span className="mr-[2px]">×</span>
            </div>
          </div>
          <div className="ml-[2px] w-[187px] h-[483px] bg-[#f4f4f4] pt-[3px] px-px pb-px border border-[#e0e0e0]">
            <div className="bg-white h-full pt-[2px] text-[6.9px]">
              {tree.map((r) => (
                <div key={r.t} className={`h-[10.33px] flex items-center whitespace-nowrap ${r.sel ? "bg-[#b0b0b0]" : ""}`}>
                  <span className="w-[12px] shrink-0 pl-[3px] flex items-center">
                    {r.exp && (
                      <span className="w-[5px] h-[5px] border border-[#aaa] text-[#444] text-[5px] leading-[3px] text-center">{r.exp}</span>
                    )}
                  </span>
                  <span className={`${r.lvl === 2 ? "ml-[10px] mr-[3px]" : "mr-[2px]"} w-[11px] shrink-0 flex justify-center`}>
                    <Ico k={r.i} size={10} />
                  </span>
                  <span className="text-[#555]">{r.t}</span>
                </div>
              ))}
            </div>
          </div>
        </div>

        <div className="flex-1 flex flex-col min-w-0">
          <div className="h-[456px] shrink-0 flex">
            {/* properties panel */}
            <div className="w-[170px] shrink-0 flex flex-col pl-[5px] pr-[4px]">
              <div className="h-[13px] flex items-center justify-end gap-[5px] text-[#777]">
                <span className="text-[6px]">▾</span>
                <span>⊥</span>
                <span className="mr-[3px]">✕</span>
              </div>
              <div className="h-[31px] flex">
                <div className="w-[115px] ml-[2px] mt-[3px] h-[12px] bg-white border border-[#e0e0e0] flex items-center justify-between px-[2px] text-[#555]">
                  <span>SFRC 2D Capacity check (1)</span>
                  <span className="text-[5px]">▾</span>
                </div>
                <div className="ml-[3px] grid grid-cols-3 gap-x-[2px] gap-y-[2px] mt-[1px] h-[26px]">
                  {["bi1", "bi2", "bi3", "bi4", "bi5", "bi6"].map((k) => (
                    <span key={k} className="w-[11px] h-[12px] flex items-center justify-center"><Ico k={k} /></span>
                  ))}
                </div>
              </div>
              <div className="h-[348px] flex border border-[#a0a0a0] w-[161px] text-[6.8px]">
                <div className="w-[151px]">
                  {rows.map((r) => <PropRow key={r.l} r={r} />)}
                </div>
                <div className="w-[9px] bg-[#cdcdcd] flex flex-col justify-between text-[#444] text-[5px] text-center">
                  <span className="h-[10px] bg-[#f0f0f0] leading-[9px]">▲</span>
                  <span className="h-[10px] bg-[#f0f0f0] leading-[9px]">▼</span>
                </div>
              </div>
              <div className="h-[12px] w-[161px] bg-gradient-to-r from-[#b4cde6] to-[#d4e2f0] font-bold text-[#444] pl-[2px] leading-[12px]">Actions</div>
              <div className="h-[50px] w-[161px] bg-[#f0f0f0] border border-[#888] flex flex-col">
                <ActionRow t="Refresh" red />
                <ActionRow t="New combination from Combination key" />
                <ActionRow t="Table results" />
                <ActionRow t="Preview" />
              </div>
            </div>

            {/* 3D view */}
            <div className="flex-1 flex flex-col pl-[3px] min-w-0">
              <div className="h-[2px] bg-[#a8a8a8] shrink-0" />
              <div className="relative w-[735px] h-[440px] shrink-0 bg-white overflow-hidden">
                <Scene />
                <div className="absolute left-[12px] top-[5.5px] w-[130px] text-[7.5px] leading-[9.1px] text-[#333] tracking-[0.1px]">
                  <div className="font-bold">SFRC 2D Capacity check</div>
                  <div>Values: <b>UC</b></div>
                  <div>Linear calculation</div>
                  <div>Combination: ULS-Set B (auto)</div>
                  <div>Extreme: Global</div>
                  <div>Selection: All</div>
                  <div>Location: In nodes avg.. System: LCS mesh element</div>
                </div>
                <span className="absolute left-0 top-px"><Ico k="rp" size={6} /></span>
                <span className="absolute right-0 top-[2px] w-[4px] h-[9px] bg-[#50a0a0] border-b-2 border-[#e02020]" />
                {/* legend */}
                <div className="absolute left-[676px] top-[6px] w-[50px] h-[88px] bg-white border border-[#666] flex">
                  <div className="w-[20px] pr-[3px] mt-[35px] flex flex-col text-[6.5px] text-[#556] items-end leading-[12px]">
                    <span>1.00</span>
                    <span>0.00</span>
                  </div>
                  <div className="ml-px mt-[29px] w-[9px] h-[37px] border border-[#777] flex flex-col">
                    <span className="flex-1 bg-[#ff0000]" />
                    <span className="flex-1 bg-[#00ff00]" />
                    <span className="flex-1 bg-[#c0c0c0]" />
                  </div>
                  <div className="ml-[4px] mt-[5px] h-[24px] text-[8px] text-[#222] [writing-mode:vertical-rl] rotate-180 whitespace-nowrap">UC [-]</div>
                </div>
              </div>
              <div className="h-[12px] shrink-0 bg-[#f0f0f0] flex items-center pl-px">
                <Icons list="vw1 vw2 *vw3 vw4 vw5 vw6 vw7 vw8 vw9 vw5 vw7 vw6 vw8 vw9" />
              </div>
              <div className="h-[2px] bg-[#c8c8c8] shrink-0" />
            </div>
          </div>

          {/* command line */}
          <div className="flex-1 flex flex-col pl-[6px] pt-px min-h-0">
            <div className="h-[15px] flex items-center justify-between text-[#666]">
              <span>Command line</span>
              <div className="flex gap-[5px] items-center">
                <span className="text-[6px]">▾</span>
                <span>⊥</span>
                <span className="mr-[2px]">✕</span>
              </div>
            </div>
            <div className="flex justify-between items-start">
              <div className="w-[206px] h-[14px] bg-[#f0f0f0] flex items-center pl-[2px]">
                <Icons list="cur | pen be1 be2 be3 be6 be4 be2 be4 be3 be2 be4 be4 be5 be6 be7" />
              </div>
              <div className="w-[278px] h-[14px] bg-[#f0f0f0] flex items-center pl-[1px]">
                <Icons list="sn1 sn2 sn3 sn4 | sn5 sn6 sn7 sn8 | sn9 | *sn10 sn11 sn12 *sn13 sn14 sn15 sn16 sn17 sn18 sn19 sn20 sn21" />
              </div>
            </div>
            <div className="h-[18px] shrink-0" />
            <div className="ml-[4px] mr-[2px] h-[10px] shrink-0 bg-white border-t-2 border-l border-[#555] pl-[2px] leading-[8px] text-[#333] text-[7.5px]">Command &gt;</div>
          </div>
        </div>
      </div>

      {/* status bar */}
      <div className="h-[10px] shrink-0 bg-[#f0f0f0] flex items-center text-[#666] text-[7px] leading-[10px] whitespace-nowrap">
        <span className="w-[74px] h-full border-r border-[#d0d0d0]" />
        <span className="w-[75px] h-full border-r border-[#d0d0d0]" />
        <span className="w-[22px] pl-[8px] border-r border-[#d0d0d0] h-full">m</span>
        <span className="w-[41px] pl-[7px] border-r border-[#d0d0d0] h-full">Plane XY</span>
        <span className="w-[661px] pl-[4px] h-full">Ready</span>
        <span className="w-[53px] pl-[5px] border-x border-[#d0d0d0] h-full">Result lock: off</span>
        <span className="w-[49px] pl-[7px] border-r border-[#d0d0d0] h-full">Snap mode</span>
        <span className="w-[55px] pl-[7px] border-r border-[#d0d0d0] h-full">Filter off</span>
        <span className="w-[45px] pl-[5px] h-full">Current UCS</span>
        <span className="w-[10px] h-[7px] ml-[2px] bg-[#1a1ae0] mr-[2px]" />
        <span className="w-[10px] h-[7px] bg-[#1a1ae0]" />
      </div>
    </div>
  );
}
